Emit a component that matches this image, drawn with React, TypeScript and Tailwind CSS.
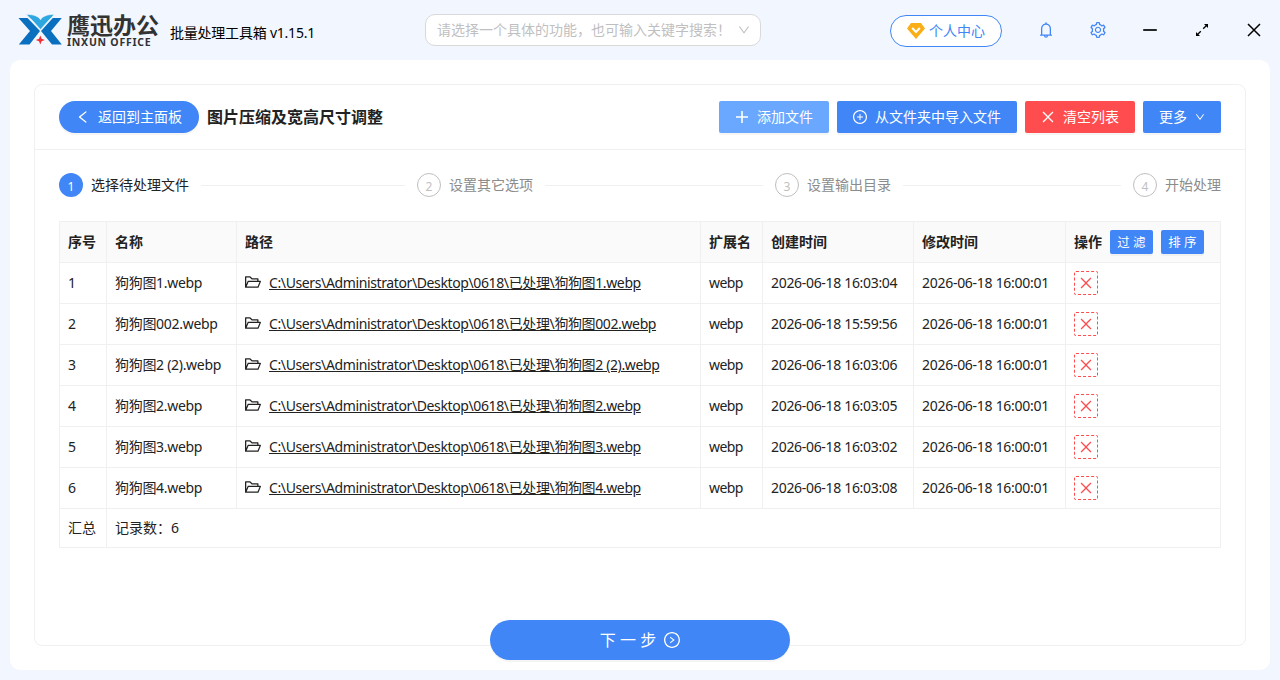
import {
  AiOutlineBell,
  AiOutlineClose,
  AiOutlineDown,
  AiOutlineFolderOpen,
  AiOutlineLeft,
  AiOutlinePlusCircle,
  AiOutlineRightCircle,
  AiOutlineSetting,
} from "react-icons/ai";

interface IFile {
  name: string;
  created: string;
}

const files: IFile[] = [
  { name: "狗狗图1.webp", created: "2026-06-18 16:03:04" },
  { name: "狗狗图002.webp", created: "2026-06-18 15:59:56" },
  { name: "狗狗图2 (2).webp", created: "2026-06-18 16:03:06" },
  { name: "狗狗图2.webp", created: "2026-06-18 16:03:05" },
  { name: "狗狗图3.webp", created: "2026-06-18 16:03:02" },
  { name: "狗狗图4.webp", created: "2026-06-18 16:03:08" },
];

const steps = ["选择待处理文件", "设置其它选项", "设置输出目录", "开始处理"];

// trims the empty margin round the ant icons
const box = "64 64 896 896";

const th = "border-r border-b border-[#f0f0f0] px-2 text-left font-bold";
const td = "border-r border-b border-[#f0f0f0] px-2 whitespace-nowrap";

const Logo = () => (
  <div className="flex items-center">
    <svg width="44" height="32" viewBox="0 0 44 32">
      <path d="M0.500 4h9l12.500 13-10.500 13.500H0.800L12 17z" fill="#0b6fc0" />
      <path d="M43.800 4h-9L23 17l11 13.500h9.800L33 17z" fill="#0b6fc0" />
      <path
        d="M8.500 0.300c6.500 0.200 12 1.700 14 5.500 2-3.800 7.500-5.300 13.500-5.500-1.500 2.700-3.500 4.200-5.500 6.200l-8 9-8-9c-2-2-4.500-3.500-6-6.200z"
        fill="#2ea7e0"
        stroke="#f2f6ff"
        strokeWidth="0.600"
      />
      <path d="M22.300 21.500l1.300 3.200 3.200 1.300-3.200 1.300-1.300 3.200-1.300-3.200-3.200-1.300 3.200-1.300z" fill="#ee2f35" />
    </svg>
    <div className="ml-[5px] flex w-[94px] flex-col text-[#333]">
      <span className="h-[24px] text-[23px] leading-[24px] font-bold whitespace-nowrap">鹰迅办公</span>
      <span className="h-[10px] text-[10.500px] leading-[10px] font-bold tracking-[0.75px] whitespace-nowrap">INXUN OFFICE</span>
    </div>
  </div>
);

const Header = () => (
  <header className="flex h-[60px] items-center pl-[18px]">
    <Logo />
    <span className="mt-[6px] ml-[9px] w-[255px] text-sm text-black tracking-[-0.22px]">批量处理工具箱 v1.15.1</span>
    <div className="flex h-8 w-[336px] items-center justify-between rounded-[10px] border border-[#d9d9d9] bg-white pr-[10px] pl-[11px] text-sm text-[#bfbfbf]">
      <span className="whitespace-nowrap">请选择一个具体的功能，也可输入关键字搜索！</span>
      <AiOutlineDown viewBox={box} size={12} />
    </div>
    <button className="mt-[2px] ml-[129px] flex h-8 w-[112px] items-center justify-center gap-1 rounded-full border border-[#4086f7] bg-white text-sm text-[#4086f7]">
      <svg width="18" height="16" viewBox="0 0 18 16">
        <path d="M4 0h10l4 5.500L9 16 0 5.500z" fill="#faad14" />
        <path d="M5.200 5L9 9l3.800-4" fill="none" stroke="#fff" strokeWidth="2" />
      </svg>
      个人中心
    </button>
    <div className="ml-9 flex items-center gap-9 text-[#4086f7]">
      <AiOutlineBell viewBox={box} size={16} />
      <AiOutlineSetting viewBox={box} size={16} />
    </div>
    <div className="ml-9 flex items-center gap-9 text-black">
      <svg width="16" height="16" viewBox="0 0 16 16">
        <path d="M1.200 8h13.600" stroke="currentColor" strokeWidth="1.700" />
      </svg>
      <svg width="16" height="16" viewBox="0 0 16 16">
        <path d="M14 2v4l-4-4zM2 14v-4l4 4z" fill="currentColor" />
        <path d="M13 3L9.200 6.800M3 13l3.800-3.800" stroke="currentColor" strokeWidth="1.300" />
      </svg>
      <svg width="16" height="16" viewBox="0 0 16 16">
        <path d="M2 2l12 12M14 2L2 14" stroke="currentColor" strokeWidth="1.500" />
      </svg>
    </div>
  </header>
);

const Toolbar = () => (
  <div className="flex h-[65px] shrink-0 items-center border-b border-[#f0f0f0] px-6 text-sm text-white">
    <button className="flex h-8 w-[140px] items-center justify-center gap-2 rounded-full bg-[#4086f7] shadow-[0_2px_0_rgba(0,0,0,0.04)]">
      <AiOutlineLeft viewBox={box} size={14} />
      返回到主面板
    </button>
    <h1 className="ml-2 text-base font-bold text-[#222]">图片压缩及宽高尺寸调整</h1>
    <div className="ml-auto flex gap-2">
      <button className="flex h-8 w-[110px] items-center justify-center gap-2 rounded-[2px] bg-[#6aa8ff] shadow-[0_2px_0_rgba(0,0,0,0.04)]">
        <svg width="14" height="14" viewBox="0 0 14 14">
          <path d="M7 1v12M1 7h12" stroke="currentColor" strokeWidth="1.600" />
        </svg>
        添加文件
      </button>
      <button className="flex h-8 w-[180px] items-center justify-center gap-2 rounded-[2px] bg-[#4086f7] shadow-[0_2px_0_rgba(0,0,0,0.04)]">
        <AiOutlinePlusCircle viewBox={box} size={14} />
        从文件夹中导入文件
      </button>
      <button className="flex h-8 w-[110px] items-center justify-center gap-2 rounded-[2px] bg-[#ff4d4f] shadow-[0_2px_0_rgba(0,0,0,0.04)]">
        <AiOutlineClose viewBox={box} size={14} />
        清空列表
      </button>
      <button className="flex h-8 w-[78px] items-center justify-center gap-2 rounded-[2px] bg-[#4086f7] shadow-[0_2px_0_rgba(0,0,0,0.04)]">
        更多
        <AiOutlineDown viewBox={box} size={10} />
      </button>
    </div>
  </div>
);

const Steps = () => (
  <div className="flex h-6 items-center text-sm">
    {steps.map((step, i) => (
      <div
        key={step}
        className={i < steps.length - 1 ? "flex w-[358px] items-center pr-3" : "flex items-center"}
      >
        <span
          className={
            i === 0
              ? "flex size-6 shrink-0 items-center justify-center rounded-full bg-[#4086f7] pt-[3px] text-xs text-white"
              : "flex size-6 shrink-0 items-center justify-center rounded-full border border-[#bfbfbf] pt-[3px] text-xs text-[#bfbfbf]"
          }
        >
          {i + 1}
        </span>
        <span
          className={
            i === 0 ? "ml-2 whitespace-nowrap text-[#222]" : "ml-2 whitespace-nowrap text-[#8c8c8c]"
          }
        >
          {step}
        </span>
        {i < steps.length - 1 && <span className="ml-3 h-px flex-1 bg-[#f0f0f0]" />}
      </div>
    ))}
  </div>
);

const FileTable = () => (
  <table className="mt-6 w-[1162px] table-fixed border-separate border-spacing-0 border-t border-l border-[#f0f0f0] text-sm text-[#222]">
    <colgroup>
      <col className="w-[47px]" />
      <col className="w-[130px]" />
      <col className="w-[464px]" />
      <col className="w-[62px]" />
      <col className="w-[151px]" />
      <col className="w-[152px]" />
      <col className="w-[155px]" />
    </colgroup>
    <thead>
      <tr className="h-[41px] bg-[#fafafa]">
        <th className={th}>序号</th>
        <th className={th}>名称</th>
        <th className={th}>路径</th>
        <th className={th}>扩展名</th>
        <th className={th}>创建时间</th>
        <th className={th}>修改时间</th>
        <th className={th}>
          <div className="flex items-center gap-2">
            操作
            <button className="h-6 w-[43px] rounded-[2px] bg-[#4086f7] pt-px text-[12.500px] font-normal text-white shadow-[0_2px_0_rgba(0,0,0,0.04)]">
              过 滤
            </button>
            <button className="h-6 w-[43px] rounded-[2px] bg-[#4086f7] pt-px text-[12.500px] font-normal text-white shadow-[0_2px_0_rgba(0,0,0,0.04)]">
              排 序
            </button>
          </div>
        </th>
      </tr>
    </thead>
    <tbody>
      {files.map((file, i) => (
        <tr key={file.name} className="h-[41px]">
          <td className={td}>{i + 1}</td>
          <td className={td}>
            <span className="tracking-[-0.3px]">{file.name}</span>
          </td>
          <td className={td}>
            <div className="flex items-center gap-2">
              <AiOutlineFolderOpen viewBox={box} size={16} className="-mt-[2px]" />
              <a className="tracking-[-0.38px] underline">
                {"C:\\Users\\Administrator\\Desktop\\0618\\已处理\\" + file.name}
              </a>
            </div>
          </td>
          <td className={td}>
            <span className="tracking-[-0.6px]">webp</span>
          </td>
          <td className={td}>
            <span className="tracking-[-0.32px]">{file.created}</span>
          </td>
          <td className={td}>
            <span className="tracking-[-0.28px]">2026-06-18 16:00:01</span>
          </td>
          <td className={td}>
            <button className="flex size-6 items-center justify-center rounded-[2px] border border-dashed border-[#ff4d4f] text-[#ff4d4f]">
              <AiOutlineClose viewBox={box} size={14} />
            </button>
          </td>
        </tr>
      ))}
      <tr className="h-[39px]">
        <td className={td}>汇总</td>
        <td className={td} colSpan={6}>
          记录数：6
        </td>
      </tr>
    </tbody>
  </table>
);

const App = () => (
  <div className="flex h-[680px] w-[1280px] flex-col overflow-hidden bg-[#f2f6ff] font-['Noto_Sans','Noto_Sans_CJK_SC',sans-serif]">
    <Header />
    <main className="mx-[10px] flex h-[610px] flex-col items-center rounded-[10px] bg-white pt-6">
      <section className="flex h-[562px] w-[1212px] shrink-0 flex-col rounded-lg border border-[#f0f0f0]">
        <Toolbar />
        <div className="px-6 pt-[23px]">
          <Steps />
          <FileTable />
        </div>
      </section>
      <button className="-mt-[26px] flex h-10 w-[300px] shrink-0 items-center justify-center gap-2 rounded-full bg-[#4086f7] text-base text-white shadow-[0_2px_0_rgba(0,0,0,0.04)]">
        <span>下 一 步</span>
        <AiOutlineRightCircle viewBox={box} size={16} />
      </button>
    </main>
  </div>
);

export default App;
